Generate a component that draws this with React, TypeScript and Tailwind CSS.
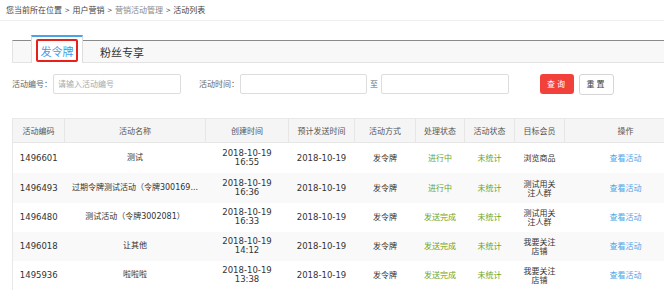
import React from "react";

const F = { fontFamily: '"DejaVu Sans","Noto Sans CJK SC",sans-serif' };
const CJK = { fontFamily: '"Noto Sans CJK SC","DejaVu Sans",sans-serif' };

const cols = [52, 141, 83, 66, 61, 49, 50, 50, 122];
const heads = ["活动编码", "活动名称", "创建时间", "预计发送时间", "活动方式", "处理状态", "活动状态", "目标会员", "操作"];

type Row = { id: string; name: string; time: string; proc: string; target: string; h: string; bg: string };
const rows: Row[] = [
  { id: "1496601", name: "测试", time: "16:55", proc: "进行中", target: "浏览商品", h: "h-[30px]", bg: "bg-white" },
  { id: "1496493", name: "过期令牌测试活动（令牌300169...", time: "16:36", proc: "进行中", target: "测试用关注人群", h: "h-[30px]", bg: "bg-[#f9f9f9]" },
  { id: "1496480", name: "测试活动（令牌3002081）", time: "16:33", proc: "发送完成", target: "测试用关注人群", h: "h-[29px]", bg: "bg-white" },
  { id: "1496018", name: "让其他", time: "14:12", proc: "发送完成", target: "我要关注店铺", h: "h-[29px]", bg: "bg-[#f9f9f9]" },
  { id: "1495936", name: "啦啦啦", time: "13:38", proc: "发送完成", target: "我要关注店铺", h: "h-[29px]", bg: "bg-white" },
];

export default function App() {
  return (
    <div className="w-[664px] h-[290px] overflow-hidden bg-white text-[#333]" style={CJK}>
      {/* breadcrumb */}
      <div className="h-[21px] border-b border-[#eeeeee] flex items-center pl-[6px] text-[8px] leading-[10px] text-[#444]">
        <span>您当前所在位置</span>
        <span className="mx-[3px]">&gt;</span>
        <span>用户营销</span>
        <span className="mx-[3px]">&gt;</span>
        <span className="text-[#888]">营销活动管理</span>
        <span className="mx-[3px]">&gt;</span>
        <span>活动列表</span>
      </div>

      {/* tabs */}
      <div className="mt-[14px] pl-[12px] flex items-end h-[28px]">
        <div className="w-[19px] h-[23px] border-l border-[#e3e3e3] border-t border-t-[#8a8a8a] border-b border-b-[#e3e3e3] bg-[#f8f8f8]" />
        <div className="w-[52px] h-[28px] border-t-[2px] border-t-[#4aa3e8] border-x border-x-[#dddddd] bg-white flex items-start justify-center pt-[2px]">
          <div className="w-[42px] h-[23px] border-[2px] border-[#e8201c] rounded-[2px] flex items-center justify-center text-[11px] leading-[12px] text-[#3d9be9]">
            发令牌
          </div>
        </div>
        <div className="flex-1 h-[23px] border-t border-t-[#8a8a8a] border-b border-b-[#e3e3e3] bg-[#f8f8f8] flex items-center pl-[17px] text-[11px] leading-[12px] text-[#333]">
          粉丝专享
        </div>
      </div>

      {/* form */}
      <div className="mt-[11px] pl-[12px] flex items-center h-[20px] text-[8px] leading-[10px] text-[#666]">
        <span className="w-[41px]">活动编号：</span>
        <div className="w-[128px] h-[20px] border border-[#dddddd] rounded-[2px] flex items-center pl-[4px] text-[#aaa]">请输入活动编号</div>
        <span className="ml-[18px] w-[41px]">活动时间：</span>
        <div className="w-[127px] h-[20px] border border-[#dddddd] rounded-[2px]" />
        <span className="ml-[3px] w-[11px]">至</span>
        <div className="w-[128px] h-[20px] border border-[#dddddd] rounded-[2px]" />
        <div className="ml-[31px] w-[34px] h-[20px] rounded-[3px] bg-[#f2413a] text-white flex items-center justify-center tracking-[2px]">查询</div>
        <div className="ml-[5px] w-[35px] h-[21px] rounded-[3px] border border-[#d5d5d5] bg-white text-[#444] flex items-center justify-center tracking-[2px]">重置</div>
      </div>

      {/* table */}
      <div className="mt-[24px] pl-[12px]">
        <table className="table-fixed border-collapse w-[674px] border-l border-t border-[#e8e8e8]" style={F}>
          <colgroup>
            {cols.map((w, i) => (
              <col key={i} style={{ width: w }} />
            ))}
          </colgroup>
          <thead>
            <tr className="h-[24px] bg-[#f5f5f5]">
              {heads.map((h) => (
                <th key={h} className="border-r border-b border-[#e6e6e6] font-normal text-[8px] leading-[10px] text-[#555] text-center" style={CJK}>
                  {h}
                </th>
              ))}
            </tr>
          </thead>
          <tbody className="text-[8.5px] leading-[10px] text-center">
            {rows.map((r) => (
              <tr key={r.id} className={`${r.h} ${r.bg}`}>
                <td>{r.id}</td>
                <td className="px-[6px] whitespace-nowrap overflow-hidden text-[8px]">{r.name}</td>
                <td className="leading-[9px]">
                  <div>2018-10-19</div>
                  <div>{r.time}</div>
                </td>
                <td>2018-10-19</td>
                <td className="text-[8px]" style={CJK}>发令牌</td>
                <td className="text-[8px] text-[#6ea51c]" style={CJK}>{r.proc}</td>
                <td className="text-[8px] text-[#6ea51c]" style={CJK}>未统计</td>
                <td className="px-[7px] text-[8px] leading-[9px]" style={CJK}>
                  <div className="break-all">{r.target}</div>
                </td>
                <td className="text-[8px] text-[#4aa6ea]" style={CJK}>查看活动</td>
              </tr>
            ))}
          </tbody>
        </table>
      </div>
    </div>
  );
}
